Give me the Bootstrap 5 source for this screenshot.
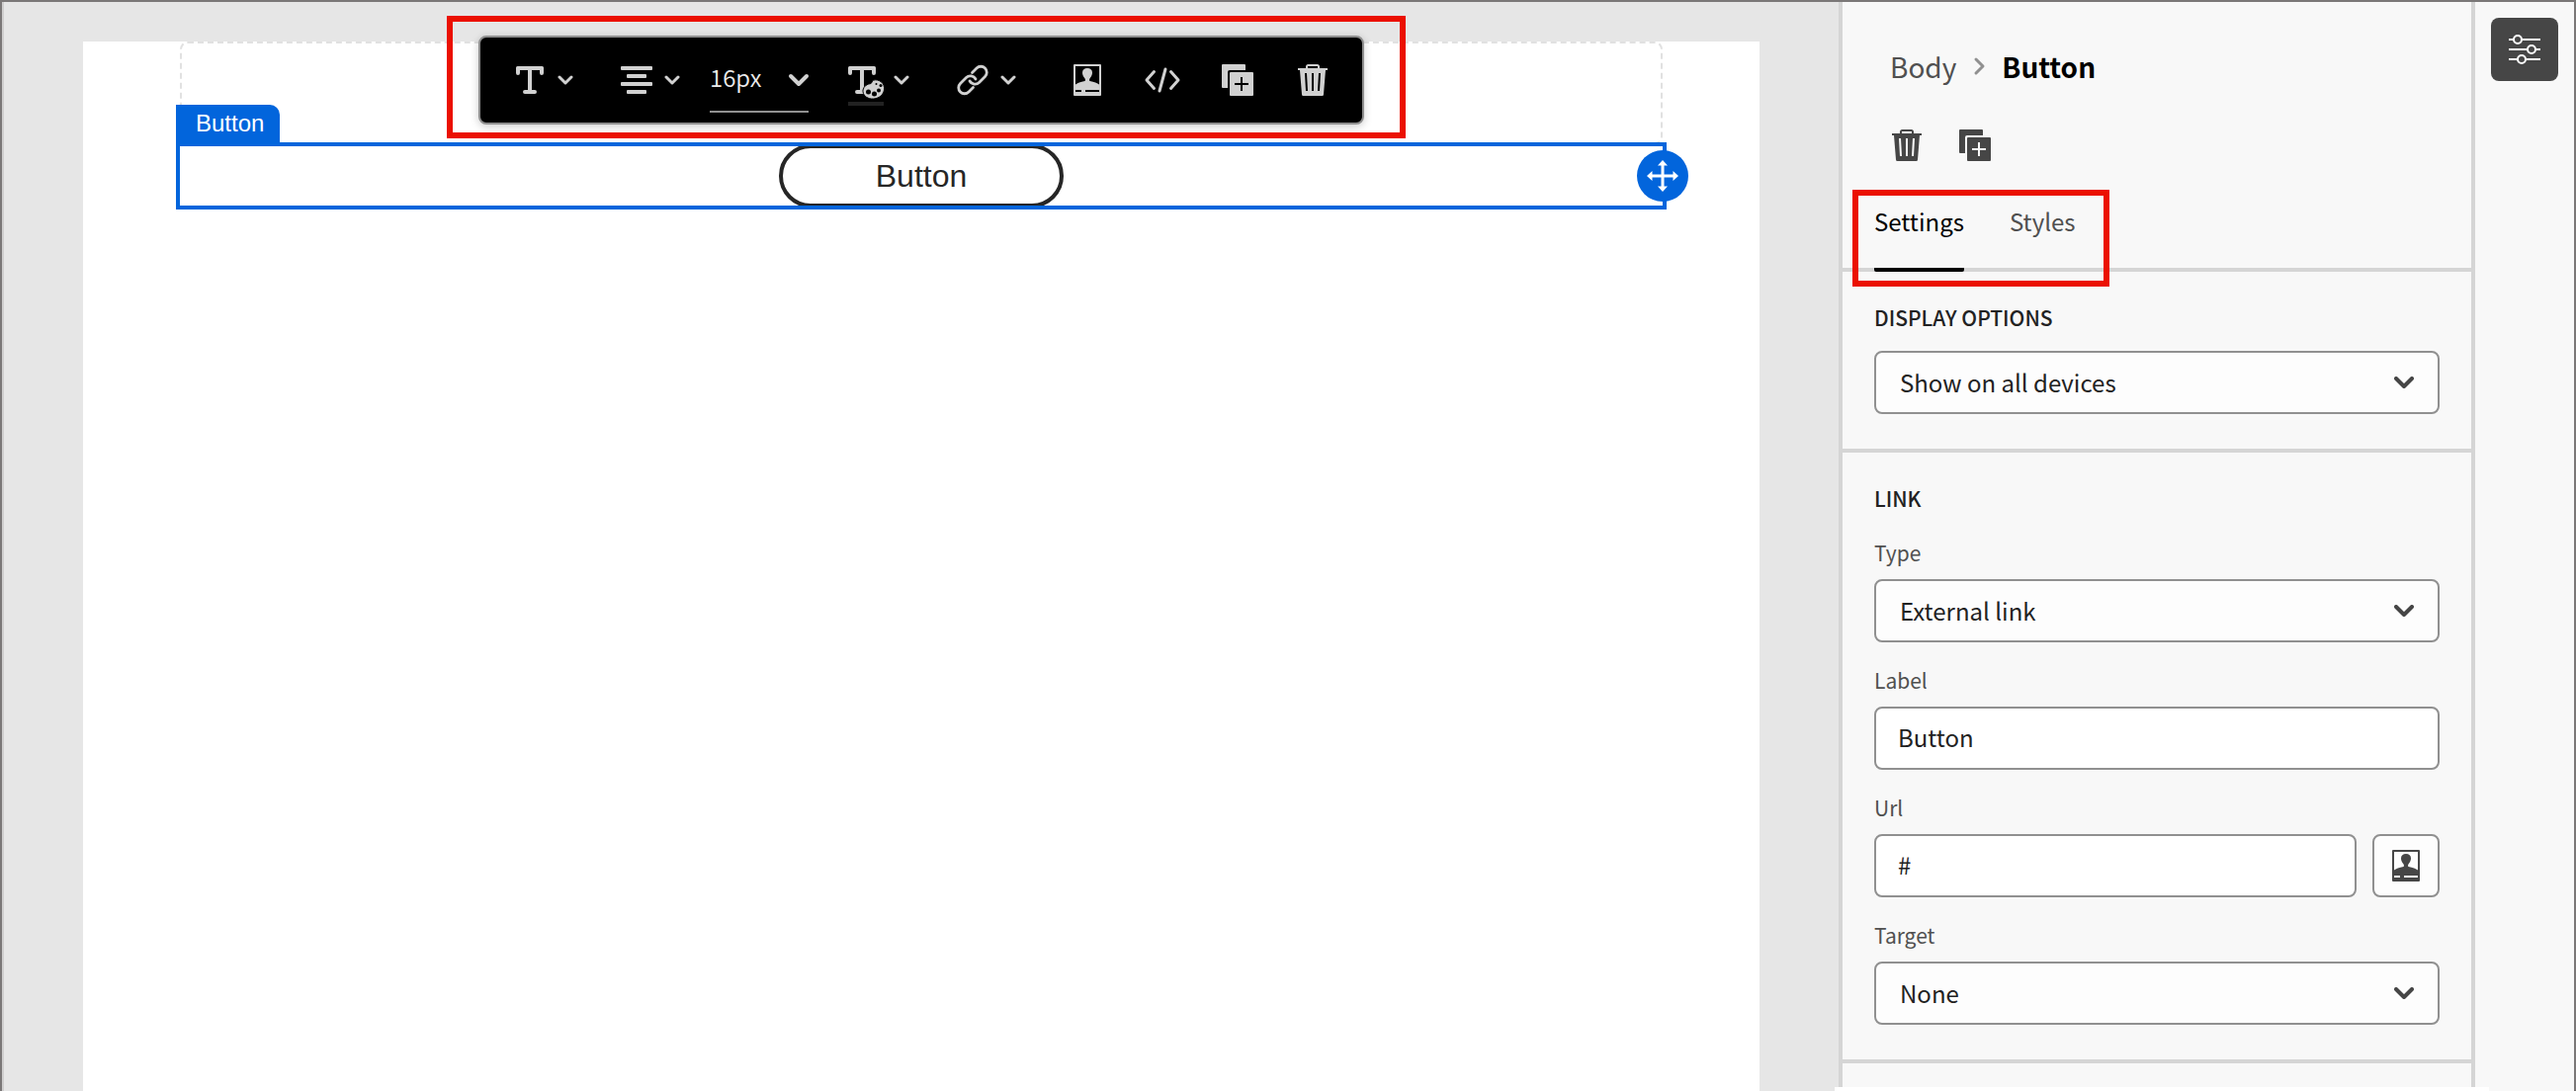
<!DOCTYPE html>
<html lang="en">
<head>
<meta charset="utf-8">
<title>Email editor</title>
<meta name="viewport" content="width=device-width, initial-scale=1">
<link href="https://cdn.jsdelivr.net/npm/bootstrap@5.3.0/dist/css/bootstrap.min.css" rel="stylesheet">
<style>
  :root { --ui-font: "Noto Sans CJK SC", "Open Sans", sans-serif; --accent: #0265dc; --line: #d5d5d5; --ring: #eb1000; }
  body { font-family: var(--ui-font); font-size: 24px; line-height: 32px; color: #222; background: #e6e6e6; }
  svg { display: block; flex: none; overflow: visible; }
  .editor { border: 2px solid #7b7878; border-bottom: 0; }
  .stage { padding: 40px 80px 0; border-left: 2px solid #d0cfcf; }
  .sheet { padding: 0 94px; }
  .dropzone { height: 104px; margin: 0 4px; border: 2px dashed #e1e1e1; border-radius: 8px; }
  .pick { height: 68px; margin-top: -2px; border: 4px solid var(--accent); }
  .pick-edge { inset: -4px; border: 4px solid var(--accent); pointer-events: none; }
  .pick-tag { left: -4px; bottom: 62px; height: 40px; padding: 0 16px 0 20px; background: var(--accent); color: #fff; font: 24px/38px "Liberation Sans", sans-serif; border-radius: 0 10px 0 0; }
  .pill { width: 288px; height: 64px; margin-top: -2px; background: #fff; border: 4px solid #262626; border-radius: 32px; color: #262626; font: 32px/1 "Liberation Sans", sans-serif; }
  .grip { right: -26px; top: 4px; width: 52px; height: 52px; background: var(--accent); border: 0; border-radius: 50%; padding: 0; }

  .tool-ring { top: -26px; left: 50%; border: 6px solid var(--ring); padding: 14px 36px 8px 26px; transform: translateX(-50%); margin-left: 5px; }
  .tool-bar { width: 896px; height: 90px; background: #000; color: #d1d1d1; border: 2px solid #8e8e8e; border-radius: 8px; box-shadow: 0 2px 8px rgba(0,0,0,.2); padding-left: 36px; }
  .tool-bar button { background: none; border: 0; padding: 0; color: inherit; display: flex; align-items: center; }
  .tool-drop { gap: 12px; margin-right: 48px; }
  .tool-drop.tight { margin-right: 30px; }
  .tool-slot { width: 76px; justify-content: center; }
  .size-box { width: 100px; height: 66px; margin-right: 40px; border-bottom: 2px solid #909090; }
  .size-box select { width: 100%; height: 64px; appearance: none; background: none; border: 0; padding: 0 0 4px; color: #ebebeb; font-size: 24px; font-weight: 350; }
  .size-box svg { right: 0; top: 27px; pointer-events: none; }

  .inspector { width: 644px; flex: none; background: #f8f8f8; border: solid var(--line); border-width: 0 4px; }
  .crumbs { padding: 47px 48px 0; font-size: 28px; line-height: 36px; gap: 17px; color: #909090; }
  .crumbs a { color: #505050; text-decoration: none; }
  .crumbs strong { color: #000; }
  .quick { padding: 46px 50px 0; gap: 38px; color: #464646; }
  .quick button { background: none; border: 0; padding: 0; color: inherit; }
  .tab-strip { margin-top: 45px; height: 67px; padding: 0 32px; gap: 46px; border-bottom: 4px solid var(--line); }
  .tab-strip a { height: 67px; color: #505050; text-decoration: none; }
  .tab-strip a.active { color: #000; border-bottom: 4px solid #000; border-radius: 2px; }
  .tab-ring { left: 10px; top: 190px; width: 260px; height: 98px; border: 6px solid var(--ring); pointer-events: none; }
  .group { padding: 30px 32px 35px; border-bottom: 4px solid var(--line); }
  .group h2 { font-size: 21px; line-height: 32px; font-weight: 500; margin: 0 0 18px; }
  .group h2.lead-in { margin-bottom: 23px; }
  .group label { display: block; font-size: 21px; line-height: 32px; color: #505050; margin-bottom: 11px; }
  .field + .field { margin-top: 22px; }
  .group .form-select, .group .form-control { height: 64px; border: 2px solid #909090; border-radius: 8px; padding: 0 24px; font-size: 24px; line-height: 32px; color: #222; background-color: #fdfdfd; }
  .group .form-control { padding: 0 22px 4px; background-color: #fff; }
  .group .form-select { background-image: url("data:image/svg+xml,%3Csvg xmlns='http://www.w3.org/2000/svg' viewBox='0 0 20 12'%3E%3Cpath d='M2 2l8 8 8-8' fill='none' stroke='%23464646' stroke-width='4' stroke-linecap='round' stroke-linejoin='round'/%3E%3C/svg%3E"); background-size: 20px 12px; background-position: right 24px center; }
  .id-btn { width: 68px; height: 64px; flex: none; border: 2px solid #909090; border-radius: 8px; background: #fdfdfd; color: #464646; padding: 0; }
  .cut { left: -8px; right: -18px; bottom: 0; height: 4px; background: #fff; }
  .rail { width: 100px; flex: none; background: #f8f8f8; padding: 16px; }
  .rail button { width: 68px; height: 64px; background: #464646; color: #fff; border: 0; border-radius: 8px; padding: 0; }
</style>
</head>
<body>
<svg class="d-none" aria-hidden="true">
  <symbol id="chev" viewBox="0 0 16 10"><path d="M2 2l6 6 6-6" fill="none" stroke="currentColor" stroke-width="3" stroke-linecap="round" stroke-linejoin="round"/></symbol>
  <symbol id="bin" viewBox="0 0 30 32"><path fill="currentColor" fill-rule="evenodd" d="M8 4V2.500A2.500 2.500 0 0 1 10.500 0h9A2.500 2.500 0 0 1 22 2.500V4h8v2h-2l-2 24.500a1.500 1.500 0 0 1-1.500 1.500h-19A1.500 1.500 0 0 1 4 30.500L2 6H0V4zM10 4h10V2H10zM7 9l1 18h2L9 9zM14 9v18h2V9zM21 9l-1 18h2l1-18z"/></symbol>
  <symbol id="dup" viewBox="0 0 32 32"><path fill="currentColor" fill-rule="evenodd" d="M1 0h22a1 1 0 0 1 1 1v5H8a2 2 0 0 0-2 2v16H1a1 1 0 0 1-1-1V1a1 1 0 0 1 1-1zM9 8h22a1 1 0 0 1 1 1v22a1 1 0 0 1-1 1H9a1 1 0 0 1-1-1V9a1 1 0 0 1 1-1zM19 13v6h-6v2h6v6h2v-6h6v-2h-6v-6z"/></symbol>
  <symbol id="person" viewBox="0 0 28 32"><path fill="currentColor" fill-rule="evenodd" d="M1 0h26a1 1 0 0 1 1 1v30a1 1 0 0 1-1 1H1a1 1 0 0 1-1-1V1a1 1 0 0 1 1-1zM2 2v18.500c2-1.500 5-2.500 9.500-3.500.8-.5.500-2-.3-3C9.500 12 9 10 9 8.500 9 5.500 11 4 14 4s5 1.500 5 4.500c0 1.500-.5 3.500-2.200 5.500-.8 1-1.100 2.500-.3 3 4.500 1 7.500 2 9.500 3.500V2zM2 26v2h6v-2zM12 26v2h14v-2z"/></symbol>
  <symbol id="tee" viewBox="0 0 28 28"><path fill="currentColor" d="M1.500 0h25A1.500 1.500 0 0 1 28 1.500V7a1 1 0 0 1-4 0V4h-8v20h3a2 2 0 0 1 0 4H9a2 2 0 0 1 0-4h3V4H4v3a1 1 0 0 1-4 0V1.500A1.500 1.500 0 0 1 1.500 0z"/></symbol>
</svg>

<div class="editor d-flex min-vh-100">
  <main class="stage flex-grow-1 d-flex flex-column">
    <div class="sheet bg-white flex-grow-1 position-relative">
      <div class="dropzone"></div>
      <section class="pick position-relative d-flex justify-content-center">
        <button class="pill" type="button">Button</button>
        <div class="pick-edge position-absolute"></div>
        <span class="pick-tag position-absolute">Button</span>
        <button class="grip position-absolute d-flex align-items-center justify-content-center" type="button" aria-label="Move">
          <svg width="32" height="32" viewBox="0 0 32 32" fill="#fff"><path d="M14.500 5h3v9.500H27v3h-9.500V27h-3v-9.500H5v-3h9.500z"/><path d="M16 0l5 5.500H11zM16 32l5-5.500H11zM0 16l5.500-5v10zM32 16l-5.500-5v10z"/></svg>
        </button>
      </section>
      <div class="tool-ring position-absolute">
        <div class="tool-bar d-flex align-items-center" role="toolbar" aria-label="Button formatting">
          <button class="tool-drop" type="button" aria-label="Text style">
            <svg width="30" height="28"><use href="#tee" width="28" height="28"/></svg>
            <svg width="16" height="10"><use href="#chev"/></svg>
          </button>
          <button class="tool-drop tight" type="button" aria-label="Align">
            <svg width="32" height="28" viewBox="0 0 32 28" fill="currentColor"><rect width="32" height="4" rx="1"/><rect x="6" y="8" width="20" height="4" rx="1"/><rect y="16" width="32" height="4" rx="1"/><rect x="6" y="24" width="20" height="4" rx="1"/></svg>
            <svg width="16" height="10"><use href="#chev"/></svg>
          </button>
          <div class="size-box position-relative">
            <select aria-label="Font size"><option>16px</option></select>
            <svg class="position-absolute" width="20" height="12" viewBox="0 0 20 12"><path d="M2 2l8 8 8-8" fill="none" stroke="currentColor" stroke-width="4" stroke-linecap="round" stroke-linejoin="round"/></svg>
          </div>
          <button class="tool-drop" type="button" aria-label="Text color">
            <svg width="34" height="52" viewBox="0 0 34 52">
              <use href="#tee" y="12" width="28" height="28"/>
              <path d="M15 36c1-4 4-6 8-6.500 1-.2.800-2.500 2.500-3.300C31 24.500 37.500 29 36.500 36c-1 6-7 9.500-13 9-5-.5-9-4-8.500-9z" fill="currentColor" stroke="#000" stroke-width="1"/>
              <g fill="#000"><circle cx="20.500" cy="38" r="2.500"/><circle cx="26.500" cy="40" r="2.500"/><circle cx="31" cy="36.500" r="2"/><circle cx="33" cy="31.500" r="1.500"/><circle cx="28.500" cy="30" r="1"/></g>
              <rect y="48" width="36" height="4" fill="#222"/>
            </svg>
            <svg width="16" height="10"><use href="#chev"/></svg>
          </button>
          <button class="tool-drop tight" type="button" aria-label="Link">
            <svg width="32" height="32" viewBox="0 0 32 32" fill="none" stroke="currentColor" stroke-width="2.800" stroke-linecap="round"><path d="M15.500 8.500l4.500-4.500a6 6 0 0 1 8.500 8.500l-6 6a6 6 0 0 1-9.500-1.500"/><path d="M16.500 23.500L12 28a6 6 0 0 1-8.500-8.500l6-6a6 6 0 0 1 9.500 1.500"/></svg>
            <svg width="16" height="10"><use href="#chev"/></svg>
          </button>
          <button class="tool-slot ms-1" type="button" aria-label="Personalize"><svg width="28" height="32"><use href="#person"/></svg></button>
          <button class="tool-slot" type="button" aria-label="Source code">
            <svg width="36" height="26" viewBox="0 0 36 26" fill="none" stroke="currentColor" stroke-width="3" stroke-linecap="round" stroke-linejoin="round"><path d="M9.500 4.500L2 13l7.500 8.500M26.500 4.500L34 13l-7.500 8.500M21 2l-6 22"/></svg>
          </button>
          <button class="tool-slot" type="button" aria-label="Duplicate"><svg width="32" height="32"><use href="#dup"/></svg></button>
          <button class="tool-slot" type="button" aria-label="Delete"><svg width="30" height="32"><use href="#bin"/></svg></button>
        </div>
      </div>
    </div>
  </main>

  <aside class="inspector position-relative">
    <nav class="crumbs d-flex align-items-center" aria-label="Breadcrumb">
      <a href="#">Body</a>
      <svg width="12" height="18" viewBox="0 0 12 18"><path d="M3 2l7 7-7 7" fill="none" stroke="currentColor" stroke-width="3" stroke-linecap="round" stroke-linejoin="round"/></svg>
      <strong>Button</strong>
    </nav>
    <div class="quick d-flex">
      <button type="button" aria-label="Delete"><svg width="30" height="32"><use href="#bin"/></svg></button>
      <button type="button" aria-label="Duplicate"><svg width="32" height="32"><use href="#dup"/></svg></button>
    </div>
    <nav class="tab-strip d-flex" aria-label="Inspector tabs">
      <a class="active" href="#settings">Settings</a>
      <a href="#styles">Styles</a>
    </nav>
    <div class="tab-ring position-absolute"></div>

    <section class="group">
      <h2 id="display-title">DISPLAY OPTIONS</h2>
      <select class="form-select" aria-labelledby="display-title"><option>Show on all devices</option></select>
    </section>
    <section class="group">
      <h2 class="lead-in">LINK</h2>
      <div class="field">
        <label for="link-type">Type</label>
        <select class="form-select" id="link-type"><option>External link</option></select>
      </div>
      <div class="field">
        <label for="link-label">Label</label>
        <input class="form-control" id="link-label" type="text" value="Button">
      </div>
      <div class="field">
        <label for="link-url">Url</label>
        <div class="d-flex gap-3">
          <input class="form-control" id="link-url" type="text" value="#">
          <button class="id-btn d-flex align-items-center justify-content-center" type="button" aria-label="Personalize url"><svg width="28" height="32"><use href="#person"/></svg></button>
        </div>
      </div>
      <div class="field">
        <label for="link-target">Target</label>
        <select class="form-select" id="link-target"><option>None</option></select>
      </div>
    </section>
    <div class="cut position-absolute"></div>
  </aside>

  <nav class="rail" aria-label="Panels">
    <button class="d-flex align-items-center justify-content-center" type="button" aria-label="Settings panel">
      <svg width="32" height="30" viewBox="0 0 32 30" fill="none" stroke="currentColor" stroke-width="2"><path d="M0 5h4.500M13.500 5H32M0 15h18.500M27.500 15H32M0 25h8.500M17.500 25H32"/><circle cx="9" cy="5" r="4"/><circle cx="23" cy="15" r="4"/><circle cx="13" cy="25" r="4"/></svg>
    </button>
  </nav>
</div>
<script src="https://cdn.jsdelivr.net/npm/bootstrap@5.3.0/dist/js/bootstrap.bundle.min.js"></script>
</body>
</html>
